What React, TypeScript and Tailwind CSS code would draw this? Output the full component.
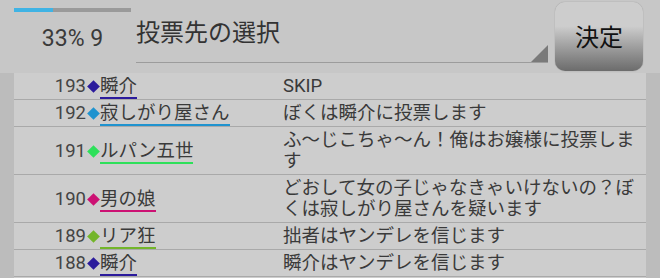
import React from "react";

const rows: [number, string, string, string][] = [
  [193, "瞬介", "#2b1b9c", "SKIP"],
  [192, "寂しがり屋さん", "#1f93cf", "ぼくは瞬介に投票します"],
  [191, "ルパン五世", "#2ee05a", "ふ～じこちゃ～ん！俺はお嬢様に投票します"],
  [190, "男の娘", "#cc1173", "どおして女の子じゃなきゃいけないの？ぼくは寂しがり屋さんを疑います"],
  [189, "リア狂", "#73b52a", "拙者はヤンデレを信じます"],
  [188, "瞬介", "#2b1b9c", "瞬介はヤンデレを信じます"],
];

export default function App() {
  return (
    <div className="w-[660px] h-[278px] overflow-hidden bg-[#c7c7c7] flex flex-col font-['Roboto','Noto_Sans_CJK_JP',sans-serif] text-[#3a3a3a]">
      {/* header */}
      <div className="h-[73px] flex shrink-0">
        <div className="w-[131px] pl-[14px] pt-[8px] flex flex-col">
          <div className="h-[4px] w-[117px] bg-[#9a9a9a] flex">
            <div className="h-full w-[39px] bg-[#3fb3e4]" />
          </div>
          <div className="text-[23px] leading-[27px] text-center mt-[13px] text-[#3a3a3a]">33% 9</div>
        </div>
        <div className="ml-[5px] w-[412px] h-[63px] relative border-b-[1.5px] border-[#9c9c9c]">
          <div className="text-[24px] leading-[30px] pt-[18px] text-[#333]">投票先の選択</div>
          <svg className="absolute right-0 bottom-0" width="17" height="17" viewBox="0 0 17 17">
            <polygon points="17,0 17,17 0,17" fill="#7a7a7a" />
          </svg>
        </div>
        <div className="ml-[7px] mt-[2px] w-[88px] h-[69px] rounded-[10px] bg-gradient-to-b from-[#cdcdcd] from-35% to-[#6c6c6c] flex items-center justify-center shadow-[0_0_1px_rgba(0,0,0,0.4)]">
          <span className="text-[24px] leading-[30px] text-[#111] mt-[2px]">決定</span>
        </div>
      </div>
      {/* body */}
      <div className="flex flex-1">
        <div className="w-[14px] bg-[#bcbcbc]" />
        <div className="flex-1 bg-[#cdcdcd] flex flex-col">
          {rows.map(([n, name, color, msg]) => (
            <div key={n} className="flex pt-[3px] pb-[2px] border-b border-[#a9a9a9]">
              <div className="w-[269px] shrink-0 flex items-center">
                <span className="w-[72px] text-right text-[18.5px] leading-[21px] text-[#444]">{n}</span>
                <span className="w-[14px] h-[21px] flex items-center justify-center">
                  <span className="block w-[9px] h-[9px] rotate-45" style={{ backgroundColor: color }} />
                </span>
                <span
                  className="text-[18.5px] leading-[21px] text-[#3a3a3a] border-b-2 -mb-[2px]"
                  style={{ borderColor: color }}
                >
                  {name}
                </span>
              </div>
              <div className="flex-1 pr-[8px] text-[18.5px] leading-[21px] text-[#3a3a3a]">{msg}</div>
            </div>
          ))}
        </div>
        <div className="w-[14px] bg-[#bcbcbc]" />
      </div>
    </div>
  );
}
